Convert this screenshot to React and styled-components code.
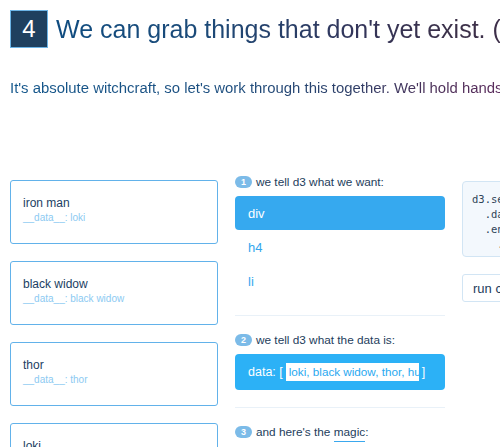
import React from 'react';
import styled, { createGlobalStyle } from 'styled-components';

const Global = createGlobalStyle`
  html, body {
    margin: 0;
    background: #fff;
    overflow: hidden;
  }
  body {
    font-family: "Liberation Sans", Arial, sans-serif;
  }
`;

const Page = styled.div`
  width: 760px;
  padding: 10px;
`;

const Header = styled.div`
  display: flex;
  align-items: center;
  gap: 8px;
  height: 38px;
`;

const Num = styled.div`
  width: 36px;
  height: 36px;
  background: #1f405f;
  border: 1px solid #6cb4e6;
  color: #fff;
  font-size: 24px;
  display: flex;
  align-items: center;
  justify-content: center;
`;

const GradientText = styled.div`
  -webkit-background-clip: text;
  background-clip: text;
  color: transparent;
  white-space: nowrap;
`;

const Title = styled(GradientText)`
  font-size: 25px;
  line-height: 38px;
  background-image: linear-gradient(90deg, #0f4c80 0px, #1c4a78 150px, #33355a 300px, #3b3048 400px, #4a2a50 640px);
`;

const Lead = styled(GradientText)`
  margin-top: 30px;
  font-size: 14.9px;
  line-height: 20px;
  background-image: linear-gradient(90deg, #12568b 0px, #1c4d7e 220px, #2e3f68 340px, #4a3058 420px, #5e2c5e 500px, #6a2a60 700px);
`;

const Columns = styled.div`
  display: flex;
  gap: 17px;
  margin-top: 77px;
  align-items: flex-start;
`;

const CardList = styled.div`
  width: 208px;
  display: flex;
  flex-direction: column;
  gap: 17px;
  padding-top: 5px;
`;

const Card = styled.div`
  box-sizing: border-box;
  height: 64px;
  border: 1px solid #62b2ea;
  border-radius: 3px;
  padding: 15px 12px;
`;

const CardName = styled.div`
  font-size: 12px;
  line-height: 15px;
  color: #1b3e63;
`;

const CardData = styled.div`
  font-size: 10px;
  line-height: 13px;
  color: #8ccaf2;
`;

const Steps = styled.div`
  width: 210px;
`;

const StepLabel = styled.div`
  display: flex;
  align-items: center;
  gap: 4px;
  height: 14px;
  font-size: 11.8px;
  color: #1d3d5c;
  margin-bottom: 7px;
  white-space: nowrap;
`;

const Badge = styled.span`
  width: 17px;
  height: 12px;
  border-radius: 6px;
  background: #7cbbe8;
  color: #fff;
  font-size: 9px;
  font-weight: bold;
  display: inline-flex;
  align-items: center;
  justify-content: center;
`;

const Magic = styled.span`
  border-bottom: 1px solid #3aa8ee;
  padding-bottom: 2px;
`;

const Option = styled.div`
  box-sizing: border-box;
  height: 34px;
  display: flex;
  align-items: center;
  padding-left: 13px;
  font-size: 13px;
  border-radius: 4px;
  color: ${p => (p.$active ? '#fff' : '#34a6ee')};
  background: ${p => (p.$active ? '#36a9ef' : 'transparent')};
`;

const Divider = styled.div`
  height: 1px;
  background: #e9f1f8;
  margin: 17px 0;
`;

const DataBox = styled.div`
  height: 36px;
  border-radius: 4px;
  background: #2cb1f6;
  color: #fff;
  font-size: 12.5px;
  display: flex;
  align-items: center;
  padding-left: 13px;
  gap: 3px;
`;

const DataInput = styled.span`
  box-sizing: border-box;
  width: 133px;
  height: 18px;
  background: #fff;
  color: #2aa9f0;
  padding-left: 3px;
  font-size: 11.7px;
  line-height: 18px;
  overflow: hidden;
  white-space: nowrap;
`;

const Side = styled.div`
  padding-top: 6px;
  display: flex;
  flex-direction: column;
  align-items: flex-start;
  gap: 17px;
`;

const Code = styled.pre`
  margin: 0;
  box-sizing: border-box;
  width: 220px;
  height: 76px;
  padding: 10px 9px;
  background: #f3f8fd;
  border: 1px solid #d2e5f4;
  border-radius: 4px;
  font-family: "DejaVu Sans Mono", "Liberation Mono", monospace;
  font-size: 10.5px;
  line-height: 15px;
  color: #2f4458;
`;

const RunButton = styled.button`
  height: 28px;
  padding: 0 10px;
  background: #fff;
  border: 1px solid #d2e5f4;
  border-radius: 3px;
  font-family: "Liberation Sans", Arial, sans-serif;
  font-size: 13px;
  color: #1d3d5c;
`;

const heroes = [
  { name: 'iron man', data: 'loki' },
  { name: 'black widow', data: 'black widow' },
  { name: 'thor', data: 'thor' },
  { name: 'loki', data: 'hulk' },
];

export default function App() {
  return (
    <Page>
      <Global />
      <Header>
        <Num>4</Num>
        <Title>We can grab things that don't yet exist. (With .enter())</Title>
      </Header>
      <Lead>
        It's absolute witchcraft, so let's work through this together. We'll hold hands.
      </Lead>
      <Columns>
        <CardList>
          {heroes.map(h => (
            <Card key={h.name}>
              <CardName>{h.name}</CardName>
              <CardData>__data__: {h.data}</CardData>
            </Card>
          ))}
        </CardList>
        <Steps>
          <StepLabel><Badge>1</Badge><span>we tell d3 what we want:</span></StepLabel>
          <Option $active>div</Option>
          <Option>h4</Option>
          <Option>li</Option>
          <Divider />
          <StepLabel><Badge>2</Badge><span>we tell d3 what the data is:</span></StepLabel>
          <DataBox>
            <span>data: [</span>
            <DataInput>loki, black widow, thor, hulk</DataInput>
            <span>]</span>
          </DataBox>
          <Divider />
          <StepLabel>
            <Badge>3</Badge>
            <span>and here's the <Magic>magic</Magic>:</span>
          </StepLabel>
        </Steps>
        <Side>
          <Code>{`d3.selectAll('div')
  .data(data)
  .enter()
    .append('div')`}</Code>
          <RunButton>run code</RunButton>
        </Side>
      </Columns>
    </Page>
  );
}
